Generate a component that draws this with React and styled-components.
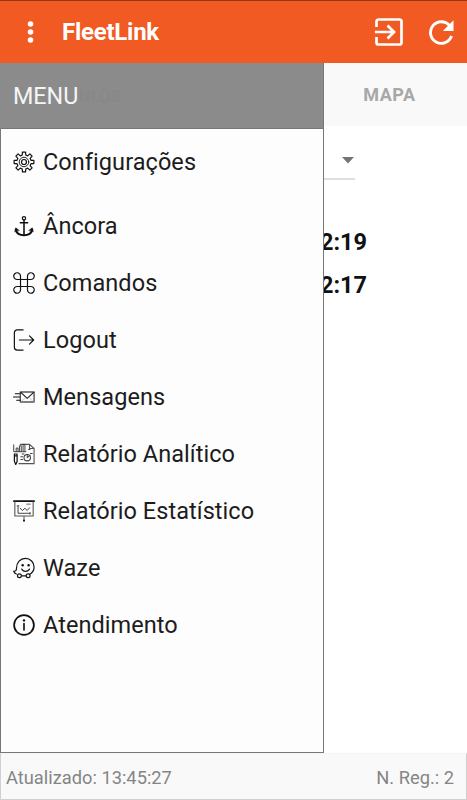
import React from "react";
import styled, { createGlobalStyle } from "styled-components";

const GlobalStyle = createGlobalStyle`
  * { box-sizing: border-box; }
  body { margin: 0; background: #fff; font-family: Roboto, sans-serif; }
`;

const Screen = styled.div`
  width: 467px;
  height: 800px;
  display: flex;
  flex-direction: column;
  background: #fff;
  overflow: hidden;
`;

const AppBar = styled.header`
  height: 63px;
  flex: none;
  display: flex;
  align-items: center;
  padding: 0 13px 0 19px;
  background: #f15a22;
  border-top: 1px solid #953817;
  color: #fff;
`;

const BarIcon = styled.svg`
  flex: none;
  display: block;
  width: ${(p) => p.$size}px;
  height: ${(p) => p.$size}px;
  margin-left: ${(p) => p.$gap || 0}px;
`;

const Title = styled.h1`
  flex: 1;
  margin: 0 0 0 19px;
  font-size: 24px;
  font-weight: 700;
  line-height: 30px;
  letter-spacing: -0.25px;
`;

const Body = styled.main`
  position: relative;
  flex: 1;
  display: flex;
  flex-direction: column;
`;

const TabBar = styled.div`
  height: 63px;
  display: flex;
  justify-content: flex-end;
  background: #f9f9f9;
`;

const Tab = styled.div`
  width: 155px;
  display: flex;
  align-items: center;
  justify-content: center;
  color: #a8a8a8;
  font-size: 18px;
  font-weight: 700;
  letter-spacing: 0.5px;
`;

const Select = styled.div`
  width: 355px;
  height: 37px;
  margin-top: 17px;
  display: flex;
  align-items: center;
  justify-content: flex-end;
  border-bottom: 2px solid #dedede;
`;

const Caret = styled.svg`
  width: 14px;
  height: 7px;
  display: block;
`;

const Times = styled.div`
  width: 367px;
  margin-top: 41px;
  text-align: right;
  color: #111;
  font-size: 23.5px;
  font-weight: 700;
  line-height: 43px;
`;

const Drawer = styled.aside`
  position: absolute;
  left: 0;
  top: 0;
  width: 324px;
  height: 690px;
  display: flex;
  flex-direction: column;
  background: #fdfdfd;
  border: 1px solid #777;
  border-top: 0;
`;

const DrawerHeader = styled.div`
  height: 66px;
  flex: none;
  display: flex;
  align-items: center;
  padding-left: 12px;
  margin: 0 0 0 -1px;
  border-left: 1px solid #8b8b8b;
  border-bottom: 1px solid #777;
  background: #8b8b8b;
  color: #f5f5f5;
  font-size: 23.3px;
`;

const FaintLabel = styled.span`
  margin-left: 1px;
  color: #888;
  font-size: 17px;
  font-weight: 500;
`;

const MenuList = styled.nav`
  display: flex;
  flex-direction: column;
  padding-top: 1px;
`;

const MenuItem = styled.div`
  height: ${(p) => (p.$tall ? 67 : 57)}px;
  display: flex;
  align-items: center;
  gap: 8px;
  padding: 0 0 ${(p) => (p.$tall ? 3 : 0)}px 12px;
  color: #1c1c1c;
  font-size: 23.5px;
  letter-spacing: 0.06px;
  white-space: nowrap;
`;

const Glyph = styled.svg`
  flex: none;
  width: 22px;
  height: 22px;
  fill: none;
  stroke: #111;
  stroke-width: ${(p) => p.$weight || 1.3};
  stroke-linecap: round;
  stroke-linejoin: round;
`;

const MenuText = styled.span`
  line-height: 30px;
`;

const Footer = styled.footer`
  height: 47px;
  flex: none;
  display: flex;
  align-items: center;
  justify-content: space-between;
  padding: 2px 12px 0 5px;
  background: #f9f9f9;
  border: 1px solid #d0d0d0;
  border-top-color: #f4f4f4;
  color: #858585;
  font-size: 18.3px;
`;

const gearPath = (() => {
  const points = [];
  for (let i = 0; i < 8; i++) {
    [[-0.24, 7.8], [-0.16, 10.9], [0.16, 10.9], [0.24, 7.8]].forEach(([offset, radius]) => {
      const angle = (i * Math.PI) / 4 + offset;
      points.push(`${(12 + radius * Math.sin(angle)).toFixed(2)} ${(12 - radius * Math.cos(angle)).toFixed(2)}`);
    });
  }
  return `M${points.join("L")}Z`;
})();

const icons = {
  gear: (
    <>
      <path d={gearPath} />
      <circle cx="12" cy="12" r="5.2" strokeWidth="1" />
      <circle cx="12" cy="12" r="2.7" />
    </>
  ),
  anchor: (
    <>
      <circle cx="12" cy="3.5" r="1.8" />
      <path d="M12 5.500v16M8 8.500h8" strokeWidth="1.700" />
      <path d="M3 16c1 4 4.500 6 9 6s8-2 9-6" strokeWidth="2.200" />
      <path d="M2 18l1-4 3.500 2.700zM22 18l-1-4-3.500 2.700z" fill="#111" strokeWidth="0.600" />
    </>
  ),
  command: <path d="M8.200 8.200V4.700A3.700 3.700 0 1 0 4.700 8.200h14.600a3.700 3.700 0 1 0-3.500-3.500v14.600a3.700 3.700 0 1 0 3.500-3.500H4.700a3.700 3.700 0 1 0 3.500 3.500z" />,
  logout: <path d="M11 1H4.500a3 3 0 0 0-3 3v16a3 3 0 0 0 3 3H11M7 12h15.500M18 7.500l4.500 4.500-4.500 4.500" />,
  mail: (
    <>
      <path d="M8 6.500h15v11H8z" stroke="#555" strokeWidth="1.500" />
      <path d="M8.500 7l7 6.500L22.500 7" strokeWidth="1.100" />
      <path d="M9 17l4.500-4.500M22 17l-4.500-4.500" stroke="#aaa" strokeWidth="0.700" />
      <path d="M2.500 8.500h5M.5 12h7M4 15.500h4" strokeWidth="1.100" />
    </>
  ),
  analytic: (
    <>
      <path d="M8 1.500h10L23 6v16.500H6.500M18 1.500V6h5" stroke="#555" strokeWidth="1.200" />
      <path d="M.8 2v7.500H14M3.500 9V5.500h2V9M7 9V3h2v6M11 9V1.500h2V9" stroke="#333" strokeWidth="1" />
      <path d="M1.500 12v8L3 23.500 4.500 20v-8zM1.500 14h3" strokeWidth="1.300" />
      <circle cx="15.500" cy="16" r="3.500" stroke="#333" strokeWidth="1.100" />
      <path d="M15.500 16l3-2.500M15.500 16v-3M10 12h2M8.500 15h2M8.500 18h2M19 11.500h2M17 7h1.500" stroke="#444" strokeWidth="1.100" />
    </>
  ),
  board: (
    <>
      <path d="M.8 1.200h22.400" strokeWidth="1.800" />
      <path d="M2 2v15.500h20V2" stroke="#555" strokeWidth="1.200" />
      <path d="M5.500 6v8.500H19M8 9l2.200 2.500L13 9l2.500 2.500L18 8.500" stroke="#333" strokeWidth="1" />
      <path d="M12 18v4" stroke="#444" strokeWidth="1" />
      <circle cx="12" cy="22.5" r="1.1" fill="#111" stroke="none" />
      <path d="M4.500 6.500h2M18.500 13.500v2M15 4.500h4" stroke="#555" strokeWidth="1" />
    </>
  ),
  waze: (
    <>
      <path d="M3.700 18.500C2.400 18 1.300 17 .8 15.500c2 .2 3-.7 3-3C3.800 6 8 1.500 13.500 1.500S23 6 23 11c0 3.600-2 6.500-5 8M10 20.500h4" strokeWidth="1.300" />
      <circle cx="7" cy="20.5" r="2.100" />
      <circle cx="16.500" cy="20.5" r="2.100" />
      <circle cx="10.500" cy="9" r=".75" fill="#111" />
      <circle cx="17" cy="9" r=".75" fill="#111" />
      <path d="M9.500 13.200c2 3.300 6.500 3.300 8.500 0" />
    </>
  ),
  info: (
    <>
      <circle cx="12" cy="12" r="10.800" strokeWidth="1.900" />
      <circle cx="12" cy="7" r="1.300" fill="#111" stroke="none" />
      <path d="M12 10.500v7" strokeWidth="1.800" />
    </>
  ),
};

const menu = [
  ["gear", "Configurações"],
  ["anchor", "Âncora"],
  ["command", "Comandos"],
  ["logout", "Logout"],
  ["mail", "Mensagens"],
  ["analytic", "Relatório Analítico"],
  ["board", "Relatório Estatístico"],
  ["waze", "Waze"],
  ["info", "Atendimento"],
];

export default function App() {
  return (
    <>
      <GlobalStyle />
      <Screen>
        <AppBar>
          <BarIcon $size={24} viewBox="0 0 24 24" fill="currentColor">
            <circle cx="11.500" cy="4" r="2.800" />
            <circle cx="11.500" cy="12" r="2.800" />
            <circle cx="11.500" cy="20" r="2.800" />
          </BarIcon>
          <Title>FleetLink</Title>
          <BarIcon $size={28} viewBox="0 0 28 28" fill="none" stroke="currentColor" strokeWidth="2.700">
            <path d="M1.500 9V3.500a2 2 0 0 1 2-2h21a2 2 0 0 1 2 2v21a2 2 0 0 1-2 2h-21a2 2 0 0 1-2-2V19M0 14h18M12.500 7.500L19 14l-6.500 6.500" />
          </BarIcon>
          <BarIcon $size={26} $gap={25} viewBox="0 0 26 26">
            <path d="M21.500 6.500A10.800 10.800 0 1 0 23.500 17" fill="none" stroke="currentColor" strokeWidth="2.900" />
            <path d="M25.500 1.300v10.700H14.800z" fill="currentColor" />
          </BarIcon>
        </AppBar>
        <Body>
          <TabBar>
            <Tab>MAPA</Tab>
          </TabBar>
          <Select>
            <Caret viewBox="0 0 14 7"><path d="M1 0h12L7 6.500z" fill="#757575" /></Caret>
          </Select>
          <Times>
            <div>2:19</div>
            <div>2:17</div>
          </Times>
          <Drawer>
            <DrawerHeader>MENU<FaintLabel>ULOS</FaintLabel></DrawerHeader>
            <MenuList>
              {menu.map(([icon, label], index) => (
                <MenuItem key={label} $tall={index === 0}>
                  <Glyph viewBox="0 0 24 24">{icons[icon]}</Glyph>
                  <MenuText>{label}</MenuText>
                </MenuItem>
              ))}
            </MenuList>
          </Drawer>
        </Body>
        <Footer>
          <span>Atualizado: 13:45:27</span>
          <span>N. Reg.: 2</span>
        </Footer>
      </Screen>
    </>
  );
}
